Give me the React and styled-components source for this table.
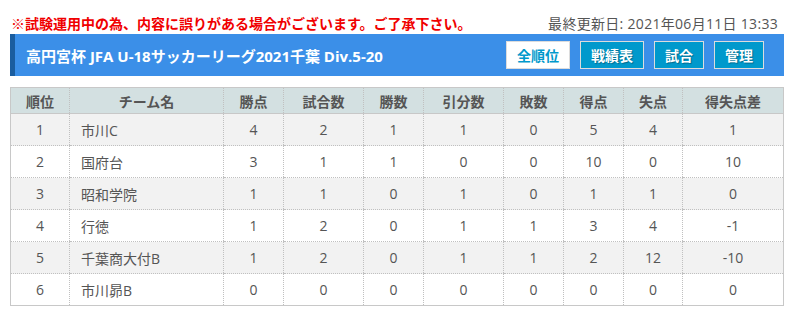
import styled, { createGlobalStyle } from "styled-components";

const GlobalStyle = createGlobalStyle`
  body {
    margin: 0;
    background: #fff;
    font-family: "Open Sans", "Noto Sans CJK JP", sans-serif;
    color: #555;
  }
`;

const Page = styled.div`
  width: 809px;
  padding: 10px 25px 0 10px;
  box-sizing: border-box;
`;

const TopLine = styled.div`
  display: flex;
  justify-content: space-between;
  align-items: center;
  height: 22px;
  padding-top: 2px;
`;

const Notice = styled.span`
  color: #f00000;
  font-size: 14px;
  font-weight: 700;
  margin-left: 1px;
`;

const Updated = styled.span`
  color: #555;
  font-size: 14px;
  letter-spacing: 0.3px;
  margin-right: 6px;
`;

const TitleBar = styled.div`
  display: flex;
  align-items: center;
  justify-content: space-between;
  height: 42px;
  background: #3b8fe8;
  border-left: 5px solid #1a5d9f;
  padding: 0 20px 0 11px;
`;

const Title = styled.h1`
  margin: 0;
  color: #fff;
  font-size: 15px;
  font-weight: 700;
`;

const Nav = styled.div`
  display: flex;
  gap: 10px;
`;

const NavButton = styled.a`
  display: flex;
  align-items: center;
  justify-content: center;
  height: 28px;
  box-sizing: border-box;
  border: 1px solid #dcdcdc;
  background: ${(p) => (p.active ? "#fff" : "#0099cc")};
  color: ${(p) => (p.active ? "#0099cc" : "#fff")};
  font-size: 14px;
  font-weight: 700;
  text-decoration: none;
  text-shadow: ${(p) => (p.active ? "none" : "1px 1px 1px rgba(0,0,0,0.3)")};
  width: ${(p) => (p.wide ? "64px" : "50px")};
`;

const Table = styled.table`
  margin-top: 11px;
  width: 774px;
  border-collapse: collapse;
  border: 1px solid #c8c8c8;
  font-size: 14px;
  table-layout: fixed;
`;

const Th = styled.th`
  height: 25px;
  padding: 0;
  background: #d3e0e1;
  color: #555;
  font-weight: 700;
  border-left: 1px dotted #c0c0c0;
  border-bottom: 1px solid #c8c8c8;
  &:first-child {
    border-left: none;
  }
`;

const Row = styled.tr`
  background: ${(p) => (p.odd ? "#f2f2f2" : "#fff")};
`;

const Td = styled.td`
  height: 31px;
  padding: 0;
  text-align: ${(p) => (p.left ? "left" : "center")};
  padding-left: ${(p) => (p.left ? "11px" : "0")};
  border-left: 1px dotted #c0c0c0;
  border-bottom: 1px dotted #c0c0c0;
  color: #555;
  &:first-child {
    border-left: none;
  }
`;

const widths = [59, 154, 60, 80, 60, 80, 60, 60, 59, 101];
const heads = ["順位", "チーム名", "勝点", "試合数", "勝数", "引分数", "敗数", "得点", "失点", "得失点差"];

const rows = [
  [1, "市川C", 4, 2, 1, 1, 0, 5, 4, 1],
  [2, "国府台", 3, 1, 1, 0, 0, 10, 0, 10],
  [3, "昭和学院", 1, 1, 0, 1, 0, 1, 1, 0],
  [4, "行徳", 1, 2, 0, 1, 1, 3, 4, -1],
  [5, "千葉商大付B", 1, 2, 0, 1, 1, 2, 12, -10],
  [6, "市川昴B", 0, 0, 0, 0, 0, 0, 0, 0],
];

const App = () => {
  return (
    <Page>
      <GlobalStyle />
      <TopLine>
        <Notice>※試験運用中の為、内容に誤りがある場合がございます。ご了承下さい。</Notice>
        <Updated>最終更新日: 2021年06月11日 13:33</Updated>
      </TopLine>
      <TitleBar>
        <Title>高円宮杯 JFA U-18サッカーリーグ2021千葉 Div.5-20</Title>
        <Nav>
          <NavButton active wide>全順位</NavButton>
          <NavButton wide>戦績表</NavButton>
          <NavButton>試合</NavButton>
          <NavButton>管理</NavButton>
        </Nav>
      </TitleBar>
      <Table>
        <colgroup>
          {widths.map((w, i) => (
            <col key={i} style={{ width: w }} />
          ))}
        </colgroup>
        <thead>
          <tr>
            {heads.map((h) => (
              <Th key={h}>{h}</Th>
            ))}
          </tr>
        </thead>
        <tbody>
          {rows.map((r, i) => (
            <Row key={r[0]} odd={i % 2 === 0}>
              {r.map((c, j) => (
                <Td key={j} left={j === 1}>
                  {c}
                </Td>
              ))}
            </Row>
          ))}
        </tbody>
      </Table>
    </Page>
  );
};

export default App;
